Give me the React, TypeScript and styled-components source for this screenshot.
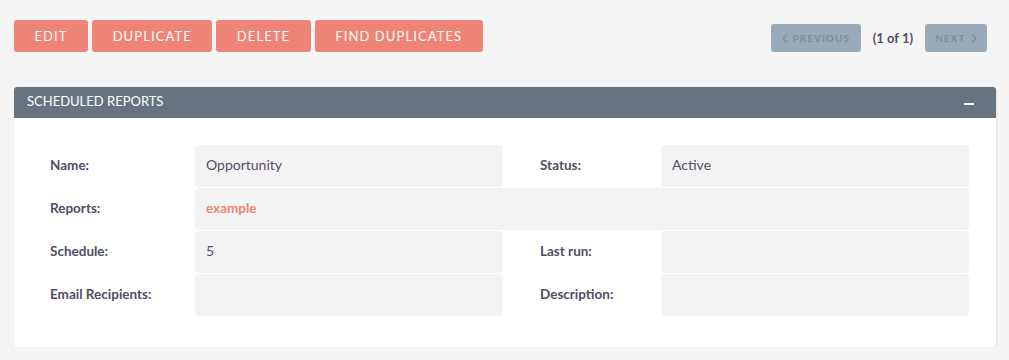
import styled, { createGlobalStyle } from 'styled-components'

const GlobalStyle = createGlobalStyle`
  *, *::before, *::after {
    box-sizing: border-box;
  }
  body {
    margin: 0;
    background: #f5f5f5;
    font-family: Lato, "Open Sans", sans-serif;
    color: #534d64;
  }
`

const Pagina = styled.div`
  padding: 20px 13px 0 14px;
`

const BarraAcoes = styled.div`
  display: flex;
  align-items: center;
  justify-content: space-between;
`

const GrupoBotoes = styled.div`
  display: flex;
  gap: 4px;
`

const Botao = styled.button`
  height: 32px;
  padding: 0 20.5px;
  border: none;
  border-radius: 3px;
  background: #f08377;
  color: #fff;
  font-family: Lato, sans-serif;
  font-size: 13px;
  letter-spacing: 1.1px;
  text-transform: uppercase;
  cursor: pointer;
`

const Paginacao = styled.div`
  display: flex;
  align-items: center;
  gap: 12px;
  margin-right: 9px;
  margin-top: 4px;
`

const BotaoPagina = styled.button<{ $largura: number }>`
  width: ${p => p.$largura}px;
  height: 28px;
  border: none;
  border-radius: 3px;
  background: #9aaab8;
  color: #7d8e9d;
  font-family: Lato, sans-serif;
  font-size: 10px;
  font-weight: 700;
  letter-spacing: 1px;
  display: flex;
  align-items: center;
  justify-content: center;
  gap: 5px;
  padding: 0;
`

const ContadorPagina = styled.span`
  font-size: 13px;
  font-weight: 700;
  color: #534d64;
`

const Painel = styled.div`
  margin-top: 35px;
  background: #fff;
  border-radius: 3px;
  box-shadow: 1px 1px 3px rgba(0, 0, 0, 0.08);
`

const CabecalhoPainel = styled.div`
  height: 31px;
  background: #677480;
  border-radius: 3px 3px 0 0;
  display: flex;
  align-items: center;
  justify-content: space-between;
  padding: 0 22px 3px 13px;
  color: #fff;
  font-size: 13px;
  text-transform: uppercase;
`

const Recolher = styled.span`
  width: 10px;
  height: 2px;
  background: #fff;
  margin-top: 5px;
`

const CorpoPainel = styled.div`
  display: grid;
  grid-template-columns: 145px 308px 158px 308px;
  grid-auto-rows: 42px;
  row-gap: 1px;
  padding: 27px 27px 31px 36px;
`

const Rotulo = styled.div<{ $recuo?: boolean }>`
  display: flex;
  align-items: center;
  padding: 0 0 3px ${p => (p.$recuo ? '37px' : '0')};
  font-size: 13.5px;
  font-weight: 700;
  color: #534d64;
`

const Campo = styled.div<{ $largo?: boolean }>`
  grid-column: ${p => (p.$largo ? 'span 3' : 'span 1')};
  display: flex;
  align-items: center;
  padding: 0 0 3px 11px;
  background: #f3f3f3;
  border-radius: 4px;
  font-size: 14px;
  color: #534d64;
`

const Link = styled.a`
  color: #f08377;
  font-weight: 700;
  font-size: 13.5px;
  text-decoration: none;
`

const Seta = ({ para }: { para: 'esq' | 'dir' }) => (
  <svg width="6" height="9" viewBox="0 0 6 9" fill="none">
    <path
      d={para === 'esq' ? 'M5 0.5 L1 4.5 L5 8.5' : 'M1 0.5 L5 4.5 L1 8.5'}
      stroke="#7d8e9d"
      strokeWidth="1.2"
    />
  </svg>
)

const App = () => {
  return (
    <>
      <GlobalStyle />
      <Pagina>
        <BarraAcoes>
          <GrupoBotoes>
            <Botao>Edit</Botao>
            <Botao>Duplicate</Botao>
            <Botao>Delete</Botao>
            <Botao>Find Duplicates</Botao>
          </GrupoBotoes>
          <Paginacao>
            <BotaoPagina $largura={90}>
              <Seta para="esq" />
              PREVIOUS
            </BotaoPagina>
            <ContadorPagina>(1 of 1)</ContadorPagina>
            <BotaoPagina $largura={62}>
              NEXT
              <Seta para="dir" />
            </BotaoPagina>
          </Paginacao>
        </BarraAcoes>

        <Painel>
          <CabecalhoPainel>
            Scheduled Reports
            <Recolher />
          </CabecalhoPainel>
          <CorpoPainel>
            <Rotulo>Name:</Rotulo>
            <Campo>Opportunity</Campo>
            <Rotulo $recuo>Status:</Rotulo>
            <Campo>Active</Campo>

            <Rotulo>Reports:</Rotulo>
            <Campo $largo>
              <Link href="#">example</Link>
            </Campo>

            <Rotulo>Schedule:</Rotulo>
            <Campo>5</Campo>
            <Rotulo $recuo>Last run:</Rotulo>
            <Campo />

            <Rotulo>Email Recipients:</Rotulo>
            <Campo />
            <Rotulo $recuo>Description:</Rotulo>
            <Campo />
          </CorpoPainel>
        </Painel>
      </Pagina>
    </>
  )
}

export default App
